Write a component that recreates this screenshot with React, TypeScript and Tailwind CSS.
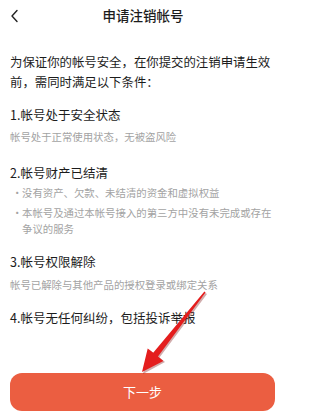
import React from "react";

const font = { fontFamily: '"Noto Sans CJK SC", "Liberation Sans", sans-serif' };

const App = () => {
  return (
    <div className="relative w-[280px] h-[418px] bg-white overflow-hidden text-[#1c1c1c]" style={font}>
      {/* header */}
      <div className="relative h-[30px] flex items-center justify-center">
        <svg className="absolute left-[10px] top-[9px]" width="9" height="14" viewBox="0 0 9 14" fill="none">
          <path d="M7 1.5 L2 7 L7 12.5" stroke="#222" strokeWidth="1.4" strokeLinecap="round" strokeLinejoin="round" />
        </svg>
        <h1 className="text-[13.5px] font-medium ml-[6px] leading-[20px]">申请注销帐号</h1>
      </div>

      <div className="pl-[10px] pr-[5px]">
        <p className="mt-[22px] text-[12.4px] leading-[20px]">
          为保证你的帐号安全，在你提交的注销申请生效前，需同时满足以下条件：
        </p>

        <h2 className="mt-[13px] text-[12.5px] leading-[20px]">1.帐号处于安全状态</h2>
        <p className="mt-[4px] text-[10.4px] leading-[16px] text-[#a3a3a3]">帐号处于正常使用状态，无被盗风险</p>

        <h2 className="mt-[18px] text-[12.5px] leading-[20px]">2.帐号财产已结清</h2>
        <ul className="mt-[2px] flex flex-col gap-[4px] text-[10.4px] leading-[16px] text-[#a3a3a3]">
          <li className="flex">
            <span className="w-[12px] shrink-0 pl-[2px]">•</span>
            <span>没有资产、欠款、未结清的资金和虚拟权益</span>
          </li>
          <li className="flex">
            <span className="w-[12px] shrink-0 pl-[2px]">•</span>
            <span>本帐号及通过本帐号接入的第三方中没有未完成或存在争议的服务</span>
          </li>
        </ul>

        <h2 className="mt-[15px] text-[12.5px] leading-[20px]">3.帐号权限解除</h2>
        <p className="mt-[5px] text-[10.4px] leading-[16px] text-[#a3a3a3]">帐号已解除与其他产品的授权登录或绑定关系</p>

        <h2 className="mt-[15px] text-[12.5px] leading-[20px]">4.帐号无任何纠纷，包括投诉举报</h2>
      </div>

      <button className="absolute left-[10px] right-[5px] top-[373px] h-[38px] rounded-[12px] bg-[#eb5e41] text-white text-[13px] flex items-center justify-center">
        下一步
      </button>

      {/* annotation arrow */}
      <svg className="absolute left-0 top-0 pointer-events-none" width="280" height="418" viewBox="0 0 280 418">
        <polygon
          points="205.4,293 207,294 159.5,357.6 165,362 143,374 149,349.5 154.7,353.8"
          fill="#7a1010"
          opacity="0.35"
        />
        <polygon
          points="204.4,291.5 205.6,292.5 158,356.6 163.4,360.9 142,372 147.7,348.5 153.2,352.8"
          fill="#e41d1d"
        />
      </svg>
    </div>
  );
};

export default App;
